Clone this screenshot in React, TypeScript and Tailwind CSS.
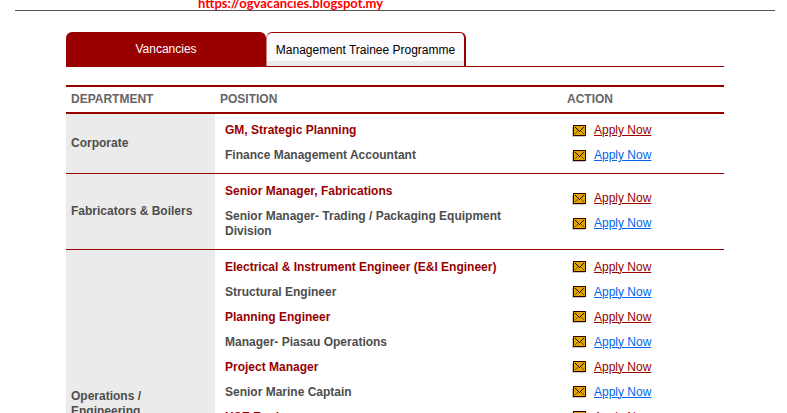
import { clsx } from "clsx";

type Group = {
  department: string;
  positions: string[];
  height: string;
  top?: boolean;
};

const groups: Group[] = [
  {
    department: "Corporate",
    positions: ["GM, Strategic Planning", "Finance Management Accountant"],
    height: "h-[60px]",
  },
  {
    department: "Fabricators & Boilers",
    positions: ["Senior Manager, Fabrications", "Senior Manager- Trading / Packaging Equipment Division"],
    height: "h-[76px]",
  },
  {
    department: "Operations / Engineering",
    positions: [
      "Electrical & Instrument Engineer (E&I Engineer)",
      "Structural Engineer",
      "Planning Engineer",
      "Manager- Piasau Operations",
      "Project Manager",
      "Senior Marine Captain",
      "HSE Engineer",
    ],
    height: "h-[310px]",
    top: true,
  },
];

function MailIcon() {
  return (
    <svg width="14" height="12" viewBox="0 0 14 12" shapeRendering="crispEdges" aria-hidden="true">
      <rect x="0" y="2" width="13" height="10" fill="#c8c8c8" />
      <rect x="1" y="0" width="13" height="11" fill="#330000" />
      <rect x="2" y="1" width="11" height="9" fill="#dca500" />
      <path
        d="M3 2h1v1h-1zM4 3h1v1h-1zM5 4h1v1h-1zM6 5h1v1h-1zM7 6h1v1h-1zM8 5h1v1h-1zM9 4h1v1h-1zM10 3h1v1h-1zM11 2h1v1h-1z"
        fill="#330000"
      />
      <path d="M5 6h1v1h-1zM4 7h1v1h-1zM3 8h1v1h-1zM9 6h1v1h-1zM10 7h1v1h-1zM11 8h1v1h-1z" fill="#8a4a00" />
    </svg>
  );
}

function Tabs() {
  return (
    <div className="flex border-b border-[#990000] text-xs" role="tablist">
      <button
        type="button"
        role="tab"
        aria-selected="true"
        className="h-[34px] w-[200px] rounded-t-md bg-[#990000] text-white"
      >
        Vancancies
      </button>
      <button
        type="button"
        role="tab"
        aria-selected="false"
        className="h-[34px] w-[200px] rounded-t-md border-t border-r-2 border-l border-[#990000] border-l-[#c98080] bg-linear-to-t from-[#ebebeb] from-[5px] to-[#fcfafc] to-[5px] text-black"
      >
        Management Trainee Programme
      </button>
    </div>
  );
}

function VacancyRow({ group }: { group: Group }) {
  const align = group.top ? "pt-[5px] align-top" : "align-middle";

  return (
    <tr className={clsx("border-b border-[#990000]", group.height)}>
      <th scope="row" className="bg-[#ebebeb] px-[5px] text-left align-middle font-bold">
        {group.department}
      </th>
      <td className={clsx("pr-12 pl-[10px] font-bold", align)}>
        <ul>
          {group.positions.map((position, i) => (
            <li key={position} className={clsx("py-[5px]", i % 2 === 0 && "text-[#990000]")}>
              {position}
            </li>
          ))}
        </ul>
      </td>
      <td className={clsx("pl-[10px]", align)}>
        <ul>
          {group.positions.map((position, i) => (
            <li key={position} className="flex items-center gap-2 py-[5px]">
              <MailIcon />
              <a
                href="#apply"
                aria-label={`Apply Now: ${position}`}
                className={clsx("underline", i % 2 === 0 ? "text-[#990000]" : "text-[#0066ee]")}
              >
                Apply Now
              </a>
            </li>
          ))}
        </ul>
      </td>
    </tr>
  );
}

export default function App() {
  return (
    <div className="h-screen overflow-hidden bg-white font-['Liberation_Sans',Arial,sans-serif]">
      <header className="mr-3 ml-[15px] flex h-[11px] items-end border-b border-[#555555] pl-[183px]">
        <a href="https://ogvacancies.blogspot.my" className="font-['Lato',sans-serif] text-[13px] leading-[14px] font-bold text-[#ff0000]">
          https://ogvacancies.blogspot.my
        </a>
      </header>

      <main className="mr-[63px] ml-[66px] pt-[21px]">
        <Tabs />
        <table className="mt-[18px] w-full table-fixed border-collapse text-xs leading-[15px] text-[#4d4d4d]">
          <thead>
            <tr className="h-[27px] border-y-2 border-[#990000] text-left text-[#666666]">
              <th scope="col" className="w-[149px] px-[5px]">
                DEPARTMENT
              </th>
              <th scope="col" className="px-[5px]">
                POSITION
              </th>
              <th scope="col" className="w-[162px] px-[5px]">
                ACTION
              </th>
            </tr>
          </thead>
          <tbody>
            {groups.map((group) => (
              <VacancyRow key={group.department} group={group} />
            ))}
          </tbody>
        </table>
      </main>
    </div>
  );
}
